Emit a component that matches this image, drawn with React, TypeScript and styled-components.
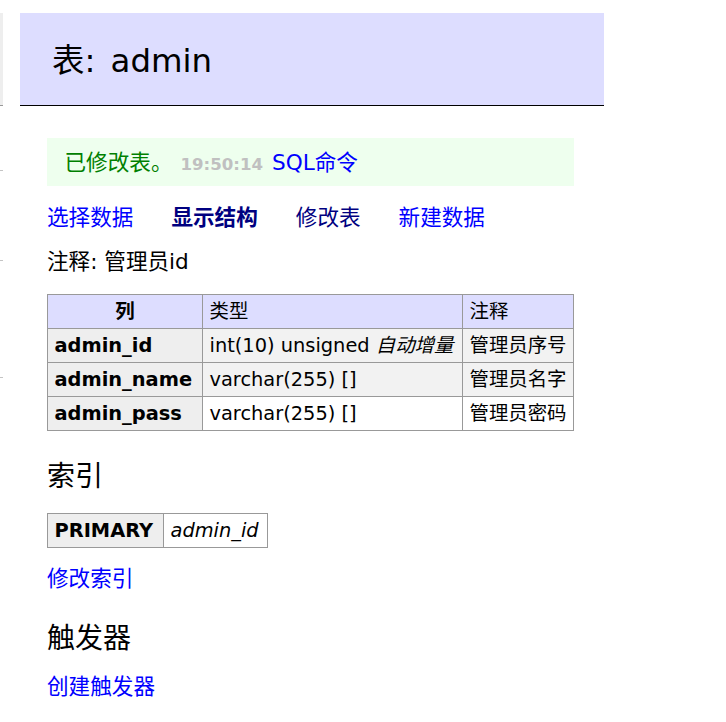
import styled, { createGlobalStyle } from "styled-components";

const GlobalStyle = createGlobalStyle`
    body {
        margin: 0;
        background: #fff;
        color: #000;
        font-family: "DejaVu Sans", Verdana, "Noto Sans CJK SC", sans-serif;
        font-size: 21.6px;
        line-height: 1.25;
    }
`;

const Page = styled.div`
    display: flex;
    align-items: flex-start;
    width: 726px;
    overflow: hidden;
`;

// the left menu is scrolled out of view, only its right edge is visible
const Menu = styled.div`
    width: 3px;
    flex-shrink: 0;
    margin-top: 13px;
    display: flex;
    flex-direction: column;
`;

const MenuHead = styled.div`
    height: 92px;
    background: #eee;
    border-bottom: 1px solid #999;
`;

const MenuBlock = styled.div<{ $h: number }>`
    height: ${p => p.$h}px;
    border-bottom: 1px solid #c4c4c4;
`;

const Main = styled.div`
    width: 584px;
    margin-left: 17px;
    margin-top: 13px;
`;

const Title = styled.h2`
    margin: 0;
    padding: 28px 32px 24px;
    height: 40px;
    font-size: 32.4px;
    line-height: 40px;
    font-weight: normal;
    word-spacing: 5px;
    background: #ddf;
    border-bottom: 1px solid #000;
`;

const Content = styled.div`
    padding: 0 30px 0 27px;
`;

const Message = styled.div`
    margin-top: 32px;
    padding: 10.5px 17.5px;
    height: 27px;
    line-height: 27px;
    background: #efe;
    color: green;
    white-space: nowrap;
`;

const Time = styled.span`
    color: silver;
    font-size: 16.6px;
    font-weight: bold;
    margin: 0 2px 0 8px;
`;

const Link = styled.a<{ $visited?: boolean; $active?: boolean }>`
    color: ${p => (p.$visited || p.$active ? "#000080" : "#00f")};
    font-weight: ${p => (p.$active ? "bold" : "normal")};
    text-decoration: none;
    cursor: pointer;
`;

const Para = styled.p`
    margin: 18px 0 0;
    height: 27px;
    white-space: nowrap;
`;

const Links = styled(Para)`
    display: flex;
    gap: 38px;
    margin-top: 18.5px;
`;

const Comment = styled(Para)`
    margin-top: 17.5px;
`;

const Table = styled.table<{ $w: number }>`
    margin-top: 18px;
    width: ${p => p.$w}px;
    border-collapse: collapse;
    border: 1px solid #999;
    font-size: 19.4px;
    line-height: 25px;
    table-layout: fixed;
`;

const Head = styled.thead`
    background: #ddf;
`;

// widths are content widths: cell total = width + 13px padding + 1px border
const Th = styled.th<{ $w?: number; $center?: boolean }>`
    width: ${p => (p.$w ? `${p.$w}px` : "auto")};
    padding: 4px 6.5px;
    border: 1px solid #999;
    background: ${p => (p.$center ? "transparent" : "#eee")};
    text-align: ${p => (p.$center ? "center" : "left")};
    font-weight: bold;
    white-space: nowrap;
    overflow: hidden;
`;

const Td = styled.td<{ $w?: number; $shade?: boolean; $italic?: boolean }>`
    width: ${p => (p.$w ? `${p.$w}px` : "auto")};
    padding: 4px 6.5px;
    border: 1px solid #999;
    background: ${p => (p.$shade ? "#f2f2f2" : "transparent")};
    font-style: ${p => (p.$italic ? "italic" : "normal")};
    white-space: nowrap;
    overflow: hidden;
`;

const Heading = styled.h3`
    margin: 28px 0 0;
    height: 35px;
    font-size: 28px;
    line-height: 35px;
    font-weight: normal;
`;

const IndexTable = styled(Table)`
    margin-top: 19px;
`;

const columns = [
    { name: "admin_id", type: "int(10) unsigned", extra: "自动增量", comment: "管理员序号" },
    { name: "admin_name", type: "varchar(255) []", extra: "", comment: "管理员名字" },
    { name: "admin_pass", type: "varchar(255) []", extra: "", comment: "管理员密码" },
];

export default function App() {
    return (
        <Page>
            <GlobalStyle />
            <Menu>
                <MenuHead />
                <MenuBlock $h={64} />
                <MenuBlock $h={89} />
                <MenuBlock $h={116} />
            </Menu>
            <Main>
                <Title>表: admin</Title>
                <Content>
                    <Message>
                        已修改表。<Time>19:50:14</Time> <Link>SQL命令</Link>
                    </Message>
                    <Links>
                        <Link>选择数据</Link>
                        <Link $active>显示结构</Link>
                        <Link $visited>修改表</Link>
                        <Link>新建数据</Link>
                    </Links>
                    <Comment>注释: 管理员id</Comment>

                    <Table $w={527}>
                        <Head>
                            <tr>
                                <Th $w={141} $center>列</Th>
                                <Td $w={246}>类型</Td>
                                <Td $w={97}>注释</Td>
                            </tr>
                        </Head>
                        <tbody>
                            {columns.map((col, i) =>
                                <tr key={col.name}>
                                    <Th>{col.name}</Th>
                                    <Td $shade={i < 2}>
                                        {col.type}{col.extra && <> <i>{col.extra}</i></>}
                                    </Td>
                                    <Td $shade={i < 2}>{col.comment}</Td>
                                </tr>
                            )}
                        </tbody>
                    </Table>

                    <Heading>索引</Heading>
                    <IndexTable $w={221}>
                        <tbody>
                            <tr>
                                <Th $w={102}>PRIMARY</Th>
                                <Td $w={90} $italic>admin_id</Td>
                            </tr>
                        </tbody>
                    </IndexTable>
                    <Para><Link>修改索引</Link></Para>

                    <Heading>触发器</Heading>
                    <Para><Link>创建触发器</Link></Para>
                </Content>
            </Main>
        </Page>
    );
}
